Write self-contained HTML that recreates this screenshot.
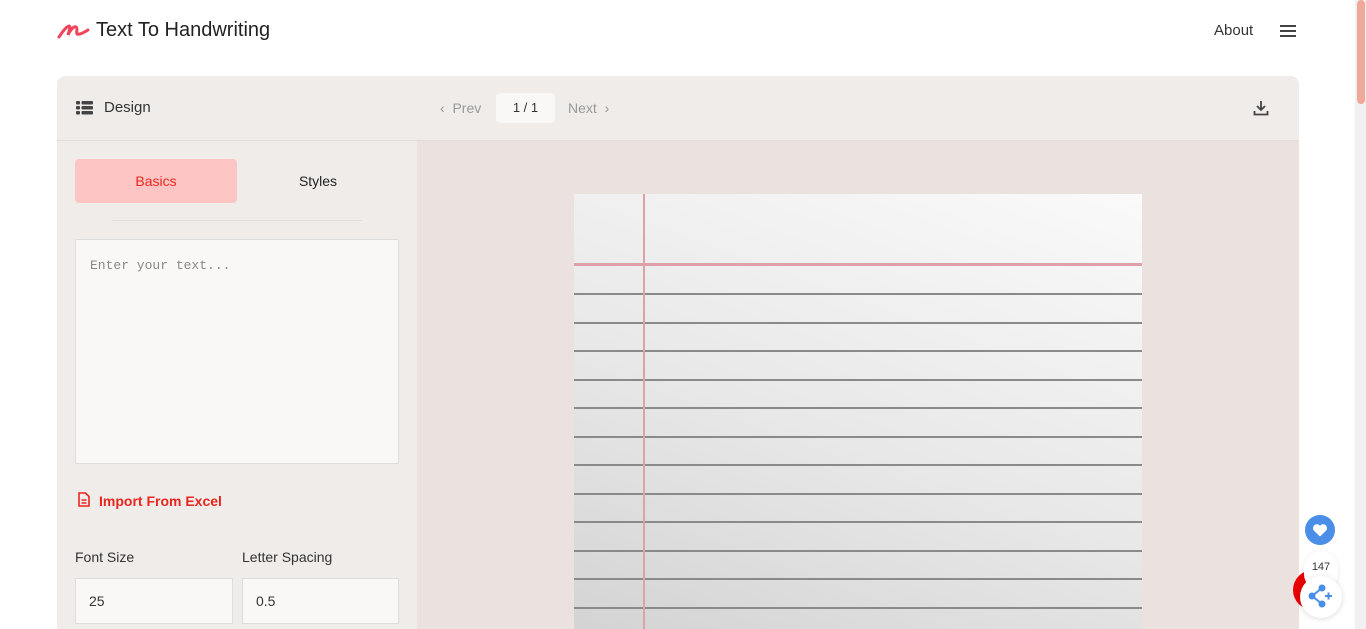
<!DOCTYPE html><html><head><style>
*{box-sizing:border-box;margin:0;padding:0}
body{width:1366px;height:629px;overflow:hidden;background:#fff;font-family:"Liberation Sans",sans-serif;position:relative;color:#333}
.sb{position:absolute;right:0;top:0;width:11px;height:629px;background:#f1f1f1}
.sb div{position:absolute;left:2px;top:0;width:8px;height:104px;background:#f0a89a;border-radius:4px}
.card{position:absolute;left:57px;top:76px;width:1242px;height:553px;background:#f0ecea;border-radius:8px 8px 0 0;overflow:hidden}
.hdr{height:65px;border-bottom:1px solid #e2dcd9;position:relative}
.left{position:absolute;left:0;top:65px;width:360px;bottom:0}
.right{position:absolute;left:360px;top:65px;right:0;bottom:0;background:#ebe2e0}
.paper{position:absolute;left:157px;top:53px;width:568px;height:500px;background:linear-gradient(200deg,#fafafa,#e8e8e8 50%,#cfcfcf);overflow:hidden}
.l{position:absolute;left:0;width:568px;height:2px;background:#8a8a8a}
</style></head><body>
<div class="sb"><div></div></div>
<svg style="position:absolute;left:57px;top:22px" width="33" height="18" viewBox="0 0 33 18"><path d="M2 15 C6 9,9 5,12 4 C14 4,12 9,11 13 C14 7,17 4,19 5 C21 6,19 10,20 12 C22 13,26 11,31 8" fill="none" stroke="#f0445c" stroke-width="3" stroke-linecap="round"/></svg>
<div style="position:absolute;left:96px;top:19px;font-size:20px;color:#222">Text To Handwriting</div>
<div style="position:absolute;left:1214px;top:22px;font-size:15px;color:#333">About</div>
<div style="position:absolute;left:1280px;top:25px;width:16px;height:2px;background:#444;box-shadow:0 5px #444,0 10px #444"></div>
<div class="card">
<div class="hdr">
<svg style="position:absolute;left:19px;top:25px" width="17" height="14" viewBox="0 0 17 14" fill="#444"><rect x="0" y="0" width="4" height="3.5" rx="1"/><rect x="5.5" y="0" width="11.5" height="3.5" rx="1"/><rect x="0" y="5" width="4" height="3.5" rx="1"/><rect x="5.5" y="5" width="11.5" height="3.5" rx="1"/><rect x="0" y="10" width="4" height="3.5" rx="1"/><rect x="5.5" y="10" width="11.5" height="3.5" rx="1"/></svg>
<div style="position:absolute;left:47px;top:23px;font-size:15px;color:#333">Design</div>
<div style="position:absolute;left:383px;top:24px;font-size:14px;color:#999">‹&nbsp; Prev</div>
<div style="position:absolute;left:439px;top:17px;width:59px;height:30px;background:#faf8f7;border-radius:4px;text-align:center;line-height:30px;font-size:13px">1 / 1</div>
<div style="position:absolute;left:511px;top:24px;font-size:14px;color:#999">Next &nbsp;›</div>
<svg style="position:absolute;left:1196px;top:24px" width="16" height="16" viewBox="0 0 16 16" fill="none" stroke="#444" stroke-width="1.8"><path d="M8 1v9M4 6l4 4 4-4M1.5 11v3.5h13V11"/></svg>
</div>
<div class="left">
<div style="position:absolute;left:18px;top:18px;width:162px;height:44px;background:#fdc6c4;border-radius:4px;color:#e8261e;font-size:14px;text-align:center;line-height:44px">Basics</div>
<div style="position:absolute;left:180px;top:18px;width:162px;height:44px;color:#222;font-size:14px;text-align:center;line-height:44px">Styles</div>
<div style="position:absolute;left:55px;top:79px;width:250px;height:1px;background:#e2dcd9"></div>
<div style="position:absolute;left:18px;top:98px;width:324px;height:225px;background:#faf8f7;border:1px solid #ddd;border-radius:2px;font-family:'Liberation Mono',monospace;font-size:13px;color:#888;padding:18px 14px">Enter your text...</div>
<svg style="position:absolute;left:21px;top:351px" width="12" height="15" viewBox="0 0 12 15" fill="none" stroke="#e8261e" stroke-width="1.6"><path d="M1 1h6.5L11 4.5V14H1z M3.5 8h5M3.5 11h5"/></svg>
<div style="position:absolute;left:42px;top:352px;font-size:14px;font-weight:bold;color:#e8261e">Import From Excel</div>
<div style="position:absolute;left:18px;top:408px;font-size:14px;color:#333">Font Size</div>
<div style="position:absolute;left:185px;top:408px;font-size:14px;color:#333">Letter Spacing</div>
<div style="position:absolute;left:18px;top:437px;width:158px;height:46px;background:#faf8f7;border:1px solid #ddd;font-size:14px;padding:14px 13px">25</div>
<div style="position:absolute;left:185px;top:437px;width:157px;height:46px;background:#faf8f7;border:1px solid #ddd;font-size:14px;padding:14px 13px">0.5</div>
</div>
<div class="right"><div class="paper">
<div style="position:absolute;left:69px;top:0;width:2px;height:500px;background:#e0a0aa;z-index:2"></div>
<div style="position:absolute;left:0;top:69px;width:568px;height:3px;background:#e0a0aa"></div>
<div class="l" style="top:99px"></div><div class="l" style="top:128px"></div><div class="l" style="top:156px"></div><div class="l" style="top:185px"></div><div class="l" style="top:213px"></div><div class="l" style="top:242px"></div><div class="l" style="top:270px"></div><div class="l" style="top:299px"></div><div class="l" style="top:327px"></div><div class="l" style="top:356px"></div><div class="l" style="top:384px"></div><div class="l" style="top:413px"></div>
</div></div>
</div>
<div style="position:absolute;left:1293px;top:570px;width:40px;height:40px;border-radius:50%;background:#e80000"></div>
<div style="position:absolute;left:1304px;top:551px;width:34px;height:40px;border-radius:17px;background:#fff;box-shadow:0 1px 4px rgba(0,0,0,.1);font-size:11px;text-align:center;padding-top:10px;color:#333">147</div>
<div style="position:absolute;left:1300px;top:576px;width:42px;height:42px;border-radius:50%;background:#fff;box-shadow:0 1px 6px rgba(0,0,0,.15)"></div>
<svg style="position:absolute;left:1308px;top:584px" width="26" height="24" viewBox="0 0 26 24" fill="#4a8ee8" stroke="#4a8ee8" stroke-width="2"><circle cx="4" cy="12" r="2.5"/><circle cx="14" cy="4" r="2.5"/><circle cx="14" cy="20" r="2.5"/><path d="M4 12L14 4M4 12l10 8M17 12h7M20.5 8.5v7" fill="none"/></svg>
<div style="position:absolute;left:1305px;top:515px;width:30px;height:30px;border-radius:50%;background:#4a8ee8"></div>
<svg style="position:absolute;left:1312px;top:523px" width="16" height="14" viewBox="0 0 16 14"><path d="M8 13.5L1.8 7.5A3.8 3.8 0 0 1 8 2.8a3.8 3.8 0 0 1 6.2 4.7z" fill="#fff"/></svg>
</body></html>
